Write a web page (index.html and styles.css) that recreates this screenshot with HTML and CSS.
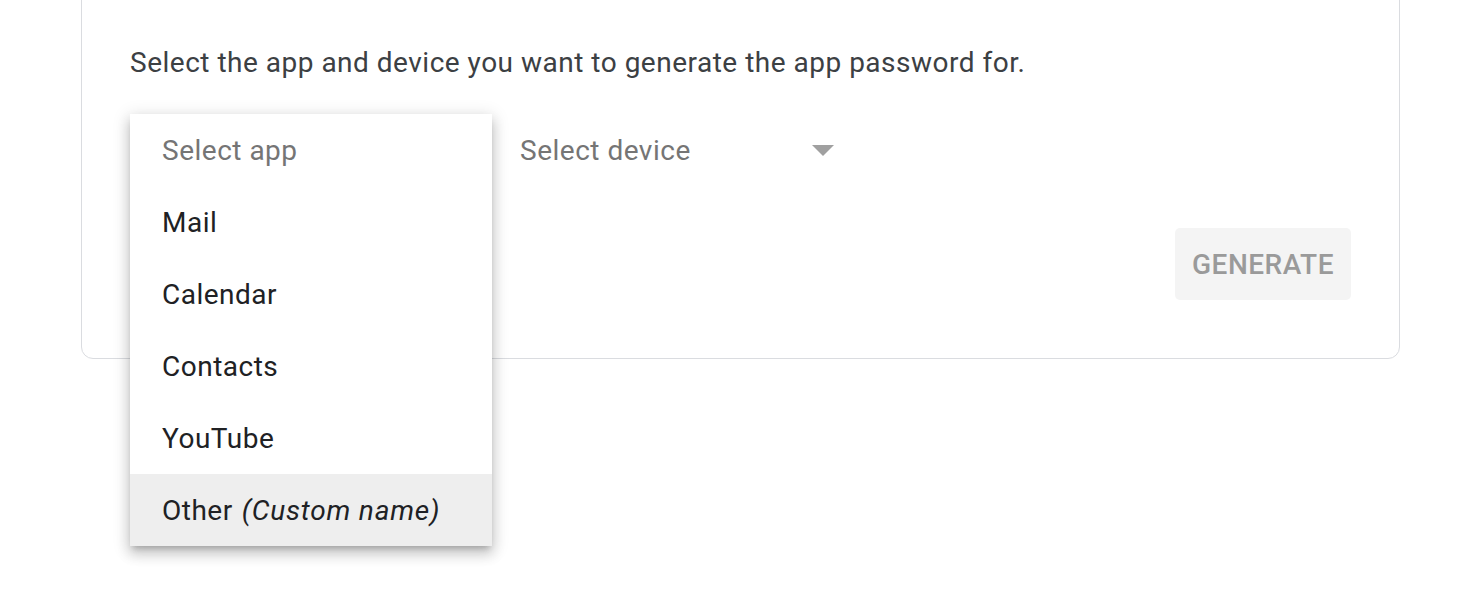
FILE: index.html
```html
<!DOCTYPE html>
<html>
<head>
<meta charset="utf-8">
<link rel="stylesheet" href="styles.css">
</head>
<body>
<div class="page">
  <section class="card">
    <p class="intro">Select the app and device you want to generate the app password for.</p>
    <div class="selects">
      <div class="select app-select">
        <span class="select-label">Select app</span>
        <ul class="menu">
          <li class="menu-item placeholder">Select app</li>
          <li class="menu-item">Mail</li>
          <li class="menu-item">Calendar</li>
          <li class="menu-item">Contacts</li>
          <li class="menu-item">YouTube</li>
          <li class="menu-item active">Other <em>(Custom name)</em></li>
        </ul>
      </div>
      <div class="select device-select">
        <span class="select-label">Select device</span>
        <span class="arrow"></span>
      </div>
    </div>
    <div class="actions">
      <button class="generate" disabled>GENERATE</button>
    </div>
  </section>
</div>
</body>
</html>
```
FILE: styles.css
```css
* { box-sizing: border-box; }
html, body { margin: 0; padding: 0; background: #fff; }
body { font-family: Roboto, "Noto Sans", Arial, sans-serif; height: 614px; }
.page { padding-left: 81px; width: 1400px; }
.card {
  margin-top: -20px;
  border: 1px solid #dadce0;
  border-radius: 12px;
  background: #fff;
  padding: 64px 48px 58px 48px;
}
.intro {
  margin: 0;
  font-size: 28px;
  line-height: 36px;
  color: #3c4043;
  letter-spacing: 0.5px;
}
.selects {
  display: flex;
  gap: 30px;
  margin-top: 33px;
  height: 72px;
}
.select {
  position: relative;
  display: flex;
  align-items: center;
  height: 72px;
  font-size: 28px;
  letter-spacing: 0.5px;
  color: #757575;
}
.app-select { width: 360px; padding-left: 32px; }
.device-select { width: 314px; justify-content: space-between; }
.arrow {
  width: 0; height: 0;
  border-left: 11px solid transparent;
  border-right: 11px solid transparent;
  border-top: 11px solid #a0a0a0;
}
.menu {
  position: absolute;
  top: 0; left: 0;
  width: 362px;
  margin: 0; padding: 0;
  list-style: none;
  background: #fff;
  box-shadow: 0 8px 12px 1px rgba(0,0,0,.14), 0 3px 16px 2px rgba(0,0,0,.12), 0 5px 6px -3px rgba(0,0,0,.2);
  z-index: 2;
}
.menu-item {
  height: 72px;
  display: flex;
  align-items: center;
  padding-left: 32px;
  font-size: 28px;
  color: #202124;
  letter-spacing: 0.5px;
}
.menu-item.placeholder { color: #757575; }
.menu-item.active { background: #eeeeee; }
.menu-item em { font-style: italic; margin-left: 9px; letter-spacing: 0.8px; }
.actions {
  display: flex;
  justify-content: flex-end;
  margin-top: 42px;
}
.generate {
  width: 176px;
  height: 72px;
  border: 0;
  border-radius: 5px;
  background: #f4f4f4;
  color: #9a9a9a;
  font-family: Roboto, "Noto Sans", Arial, sans-serif;
  font-size: 28px;
  font-weight: 500;
  letter-spacing: 0.5px;
}
```
